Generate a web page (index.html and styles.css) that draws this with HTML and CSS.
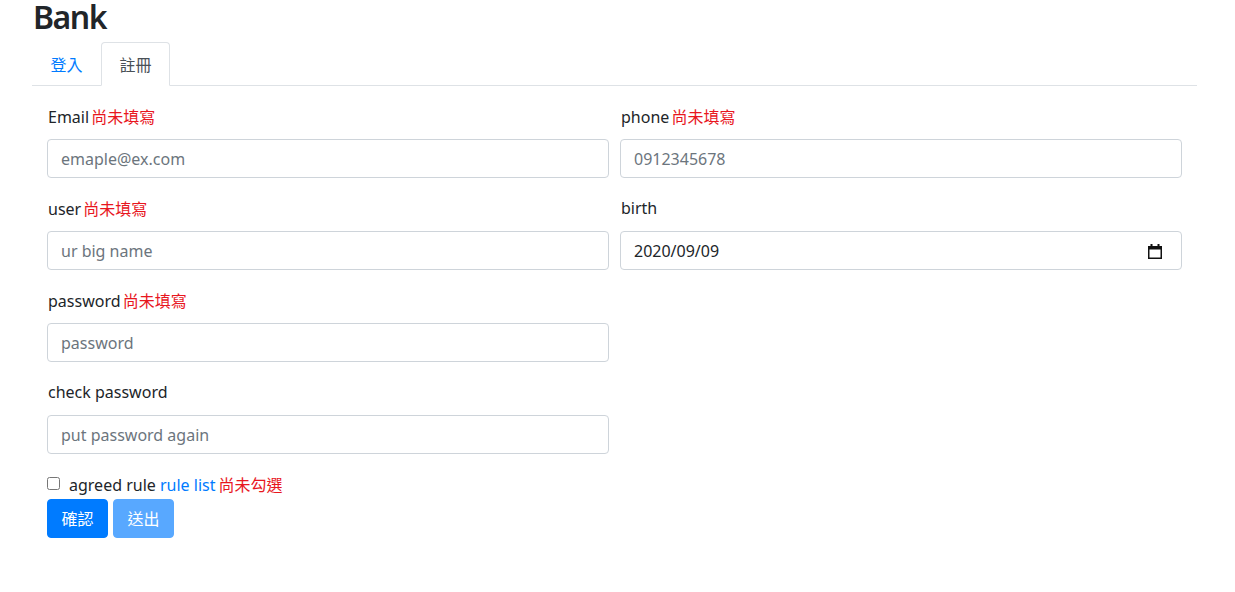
FILE: index.html
```html
<!DOCTYPE html>
<html lang="zh-Hant">
<head>
<meta charset="utf-8">
<title>Bank</title>
<link rel="stylesheet" href="styles.css">
</head>
<body>
<div class="container">
  <h2 class="title">Bank</h2>
  <ul class="tabs">
    <li class="tab"><a class="tab-link" href="#">登入</a></li>
    <li class="tab"><a class="tab-link active" href="#">註冊</a></li>
  </ul>
  <form class="form">
    <div class="grid">
      <div class="group">
        <label class="label">Email <span class="warn">尚未填寫</span></label>
        <input class="control" type="text" placeholder="emaple@ex.com">
      </div>
      <div class="group">
        <label class="label">phone <span class="warn">尚未填寫</span></label>
        <input class="control" type="text" placeholder="0912345678">
      </div>
      <div class="group">
        <label class="label">user <span class="warn">尚未填寫</span></label>
        <input class="control" type="text" placeholder="ur big name">
      </div>
      <div class="group">
        <label class="label">birth</label>
        <div class="date-wrap">
          <input class="control date" type="text" value="2020/09/09">
          <svg class="cal" width="16" height="16" viewBox="0 0 16 16" aria-hidden="true">
            <rect x="3.5" y="1" width="2" height="3" fill="#111"/>
            <rect x="10.5" y="1" width="2" height="3" fill="#111"/>
            <rect x="1" y="3" width="14" height="3.5" fill="#111"/>
            <rect x="1.75" y="3.75" width="12.5" height="11.5" fill="none" stroke="#111" stroke-width="1.5"/>
          </svg>
        </div>
      </div>
      <div class="group">
        <label class="label">password <span class="warn">尚未填寫</span></label>
        <input class="control" type="password" placeholder="password">
      </div>
      <div class="group empty"></div>
      <div class="group">
        <label class="label">check password</label>
        <input class="control" type="password" placeholder="put password again">
      </div>
    </div>
    <div class="check-row">
      <input class="check" type="checkbox" id="agree">
      <label class="check-label" for="agree">agreed rule <a class="link" href="#">rule list</a><span class="warn gap">尚未勾選</span></label>
    </div>
    <div class="buttons">
      <button class="btn" type="button">確認</button>
      <button class="btn disabled" type="button" disabled>送出</button>
    </div>
  </form>
</div>
</body>
</html>
```
FILE: styles.css
```css
* { box-sizing: border-box; }
html, body { margin: 0; padding: 0; background: #fff; }
body {
  font-family: "Noto Sans", "Noto Sans CJK TC", sans-serif;
  font-size: 16px;
  color: #212529;
}
.container {
  padding: 0 38px 0 32px;
}
.title {
  margin: 0;
  height: 42px;
  font-size: 32px;
  font-weight: 600;
  line-height: 34px;
  letter-spacing: -1.5px;
  padding-left: 1px;
  color: #212529;
}
.tabs {
  list-style: none;
  margin: 0;
  padding: 0;
  display: flex;
  border-bottom: 1px solid #dee2e6;
}
.tab { margin-bottom: -1px; }
.tab-link {
  display: block;
  height: 44px;
  line-height: 42px;
  padding: 0 17.5px;
  border: 1px solid transparent;
  border-radius: 4px 4px 0 0;
  color: #007bff;
  text-decoration: none;
  font-family: "Noto Sans CJK TC", sans-serif;
}
.tab-link.active {
  color: #495057;
  background: #fff;
  border-color: #dee2e6 #dee2e6 #fff;
}
.form {
  padding: 16px 15px 0;
}
.grid {
  display: grid;
  grid-template-columns: 1fr 1fr;
  column-gap: 11px;
}
.group {
  margin-bottom: 16px;
}
.group.empty { margin: 0; }
.label {
  display: block;
  height: 29px;
  line-height: 29px;
  margin-bottom: 8px;
  padding-left: 1px;
}
.warn {
  color: #e8161e;
  font-family: "Noto Sans CJK TC", sans-serif;
  margin-left: -2px;
}
.warn.gap { margin-left: 3px; }
.control {
  display: block;
  width: 100%;
  height: 39px;
  padding: 0 13px;
  font: inherit;
  font-size: 16px;
  color: #495057;
  background: #fff;
  border: 1px solid #ced4da;
  border-radius: 4px;
  outline: none;
}
.control::placeholder { color: #6c757d; opacity: 1; }
.date-wrap { position: relative; }
.date { color: #212529; }
.cal {
  position: absolute;
  right: 19px;
  top: 12px;
}
.check-row {
  display: flex;
  align-items: center;
  height: 29px;
}
.check {
  width: 13px;
  height: 13px;
  margin: 0 9px 0 0;
  position: relative;
  top: -1px;
}
.check-label { line-height: 29px; }
.link { color: #007bff; text-decoration: none; }
.buttons {
  display: flex;
  gap: 5px;
}
.btn {
  height: 39px;
  padding: 0 13.5px 2px;
  font-family: "Noto Sans CJK TC", sans-serif;
  font-size: 16px;
  color: #fff;
  background: #007bff;
  border: 1px solid #007bff;
  border-radius: 4px;
  cursor: pointer;
}
.btn.disabled {
  opacity: 0.65;
  cursor: default;
}
```
